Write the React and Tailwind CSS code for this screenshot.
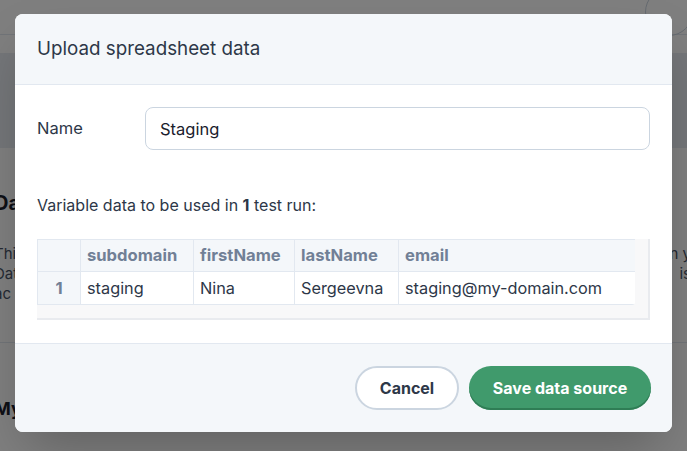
import { useState } from "react";

const columns = [
  { key: "subdomain", width: "w-[113px]" },
  { key: "firstName", width: "w-[101px]" },
  { key: "lastName", width: "w-[104px]" },
  { key: "email", width: "w-[237px]" },
];

const rows = [
  {
    subdomain: "staging",
    firstName: "Nina",
    lastName: "Sergeevna",
    email: "staging@my-domain.com",
  },
];

// The page behind the dialog: only its edges show through the overlay.
function BackgroundPage() {
  return (
    <div className="min-h-screen bg-white text-[#1a202c]">
      <div className="h-[35px] flex justify-end border-b border-[#e2e8f0]">
        <div className="w-[48px] h-[48px] mr-[-6px] mt-[-12px] rounded-full border border-[#cbd5e0]" />
      </div>
      <div className="h-[18px]" />
      <div className="h-[95px] bg-[#e9edf2]" />
      <div className="pt-[40px]">
        <h2 className="text-[20px] font-bold ml-[-6px]">Data sources</h2>
        <div className="mt-[26px] flex justify-between text-[15px] leading-[20px] text-[#4a5568]">
          <p className="ml-[-6px]">
            This
            <br />
            Data
            <br />
            ac
          </p>
          <p className="mr-[-4px] text-right">
            n y
            <br />
            is
          </p>
        </div>
      </div>
      <div className="mt-[38px] border-t border-[#e2e8f0]" />
      <h2 className="mt-[52px] ml-[-6px] text-[18px] font-bold">My</h2>
    </div>
  );
}

function App() {
  const [name, setName] = useState("Staging");

  return (
    <div
      className="relative w-[687px] h-[451px] overflow-hidden"
      style={{ fontFamily: "Inter, 'Noto Sans', sans-serif" }}
    >
      <BackgroundPage />

      <div className="absolute inset-0 bg-black/50">
        <div className="ml-[15px] mt-[14px] w-[657px] h-[418px] flex flex-col rounded-lg overflow-hidden bg-white shadow-2xl">
          <div className="h-[71px] shrink-0 flex items-center px-[22px] bg-[#f4f7fa] border-b border-[#e2e8f0]">
            <h1 className="text-[18.8px] text-[#2d3748]">Upload spreadsheet data</h1>
          </div>

          <div className="flex-1 px-[22px] pt-[22px]">
            <div className="flex items-center">
              <label className="w-[108px] text-[16.5px] text-[#2d3748]">Name</label>
              <input
                value={name}
                onChange={(e) => setName(e.target.value)}
                className="flex-1 h-[43px] px-[14px] rounded-lg border border-[#cbd5e0] text-[16.5px] text-[#1a202c] outline-none"
              />
            </div>

            <p className="mt-[44px] text-[16px] leading-[22px] text-[#2d3748]">
              Variable data to be used in <span className="font-bold">1</span> test run:
            </p>

            <div className="mt-[23px] h-[81px] flex flex-col bg-[#f8f8f9] border-r-2 border-b-2 border-[#e9ebef]">
              <div className="flex">
                <div className="w-[598px] bg-white border-l border-[#e2e8f0] rounded-br-[3px] overflow-hidden text-[16.6px]">
                  <div className="flex h-[33px] bg-[#f4f7fa] border-t border-b border-[#e2e8f0]">
                    <div className="w-[43px] shrink-0 border-r border-[#e2e8f0]" />
                    {columns.map((col) => (
                      <div
                        key={col.key}
                        className={`${col.width} shrink-0 px-[6px] flex items-center font-bold text-[#718096] border-r border-[#e2e8f0]`}
                      >
                        {col.key}
                      </div>
                    ))}
                  </div>
                  {rows.map((row, i) => (
                    <div key={i} className="flex h-[33px] border-b border-[#e2e8f0]">
                      <div className="w-[43px] shrink-0 flex items-center justify-center bg-[#f4f7fa] font-bold text-[#718096] border-r border-[#e2e8f0]">
                        {i + 1}
                      </div>
                      {columns.map((col) => (
                        <div
                          key={col.key}
                          className={`${col.width} shrink-0 px-[6px] flex items-center text-[16.3px] text-[#2d3748] border-r border-[#e2e8f0]`}
                        >
                          {row[col.key]}
                        </div>
                      ))}
                    </div>
                  ))}
                </div>
              </div>
            </div>
          </div>

          <div className="h-[89px] shrink-0 flex items-center justify-end gap-[10px] px-[21px] bg-[#f4f7fa] border-t border-[#e2e8f0]">
            <button className="h-[44px] w-[104px] rounded-full border-2 border-[#cbd5e0] bg-white text-[16px] font-bold text-[#2d3748]">
              Cancel
            </button>
            <button className="h-[44px] w-[182px] rounded-full bg-[#409a6c] text-[16px] font-bold text-white shadow-[inset_0_-2px_0_#2f7d55]">
              Save data source
            </button>
          </div>
        </div>
      </div>
    </div>
  );
}

export default App;
